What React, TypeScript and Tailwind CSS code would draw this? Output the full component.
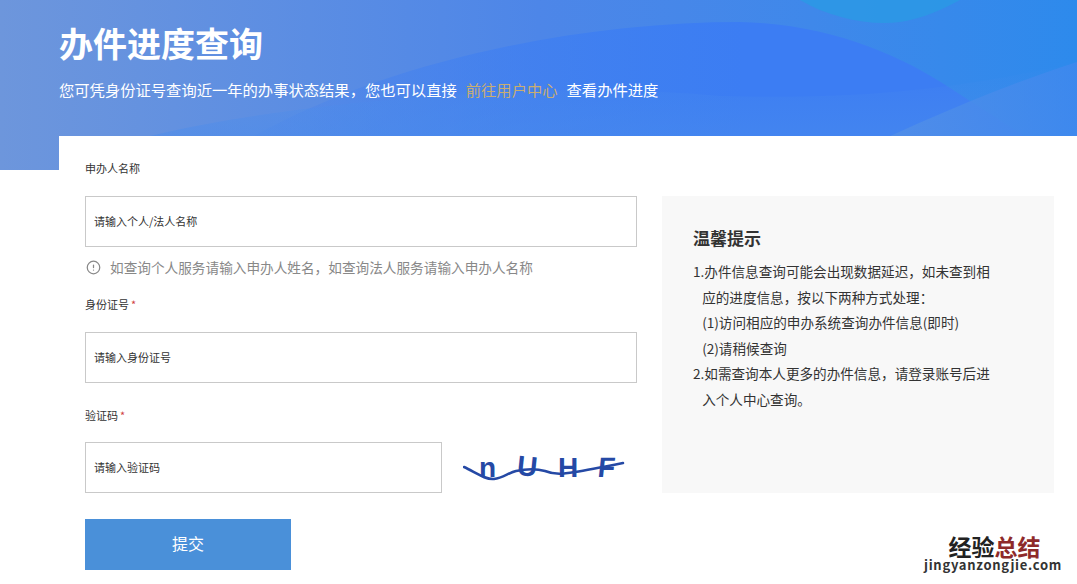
import { CircleAlert } from 'lucide-react'

const tips = [
  '1.办件信息查询可能会出现数据延迟，如未查到相',
  '\u00a0\u00a0\u00a0应的进度信息，按以下两种方式处理：',
  '\u00a0\u00a0\u00a0(1)访问相应的申办系统查询办件信息(即时)',
  '\u00a0\u00a0\u00a0(2)请稍候查询',
  '2.如需查询本人更多的办件信息，请登录账号后进',
  '\u00a0\u00a0\u00a0入个人中心查询。',
]

function Header() {
  return (
    <div className="relative h-[170px] overflow-hidden bg-gradient-to-r from-[#6d96dc] via-[#4d86e8] to-[#2d8aec]">
      {/* background waves */}
      <svg className="absolute inset-0 h-full w-full" viewBox="0 0 1077 170" preserveAspectRatio="none">
        <defs>
          <linearGradient id="band" x1="0" y1="0" x2="1" y2="0">
            <stop offset="0" stopColor="#3c7df3" stopOpacity="0" />
            <stop offset="0.62" stopColor="#3c7df3" stopOpacity="1" />
            <stop offset="1" stopColor="#3c7df3" stopOpacity="1" />
          </linearGradient>
          <linearGradient id="low" x1="0" y1="0" x2="1" y2="0">
            <stop offset="0" stopColor="#5a92e4" stopOpacity="0.8" />
            <stop offset="1" stopColor="#3f88ee" stopOpacity="0.8" />
          </linearGradient>
          <linearGradient id="fade" x1="0" y1="0" x2="0" y2="1">
            <stop offset="0" stopColor="#4a8cec" stopOpacity="0" />
            <stop offset="1" stopColor="#4a8cec" stopOpacity="0.7" />
          </linearGradient>
        </defs>
        <path d="M200 170 C340 70 560 22 740 22 C830 24 900 55 950 88 L1077 170 Z" fill="url(#band)" />
        <path d="M130 170 L150 136 C300 100 560 80 720 96 C850 100 960 90 1077 62 L1077 170 Z" fill="url(#fade)" />
        <path d="M820 170 C900 130 990 90 1077 62 L1077 170 Z" fill="url(#low)" />
        <path d="M800 0 C830 18 870 26 900 22 C925 18 945 8 960 0 Z" fill="#2a9be4" opacity="0.75" />
      </svg>
      <div className="relative pl-[59px]">
        <h1 className="pt-[18px] text-[34px] leading-[50px] font-bold text-white">办件进度查询</h1>
        <p className="mt-[9px] text-[15.3px] leading-[24px] text-white">
          您可凭身份证号查询近一年的办事状态结果，您也可以直接
          <span className="mx-[9px] text-[#c8ad72]">前往用户中心</span>
          查看办件进度
        </p>
      </div>
    </div>
  )
}

function Label({ text, required }: { text: string; required?: boolean }) {
  return (
    <div className="h-5 text-[11px] leading-[18px] text-[#333]">
      {text}
      {required && <span className="ml-[2px] text-[#d0403f]">*</span>}
    </div>
  )
}

function Captcha() {
  return (
    <div className="relative ml-[21px] h-[51px] w-[164px] overflow-hidden">
      <div className="flex h-full items-center pl-[16px] font-['Liberation_Sans',sans-serif] text-[28px] font-bold text-[#2549a5]">
        <span className="w-[38px]">n</span>
        <span className="w-[41px] rotate-6">U</span>
        <span className="w-[40px]">H</span>
        <span className="-skew-x-6">F</span>
      </div>
      {/* strike line */}
      <svg className="absolute inset-0" width="164" height="51" viewBox="0 0 164 51" fill="none">
        <path
          d="M1 25 C12 30 22 38 31 37 C40 36 45 31 53 29 C62 27 72 26 82 29 C92 33 100 32 112 30 C125 28 145 24 160 21"
          stroke="#2549a5"
          strokeWidth="2.5"
          strokeLinecap="round"
        />
      </svg>
    </div>
  )
}

function Tips() {
  return (
    <div className="mt-[37px] mr-[23px] ml-[25px] h-[297px] flex-1 bg-[#f8f8f8] pt-[30px] pl-[31px]">
      <h3 className="text-[17px] leading-[24px] font-bold text-[#333]">温馨提示</h3>
      <div className="mt-[9px] text-[13.6px] leading-[25.6px] whitespace-nowrap text-[#333]">
        {tips.map((line, i) => (
          <div key={i}>{line}</div>
        ))}
      </div>
    </div>
  )
}

export default function App() {
  return (
    <div className="relative h-[584px] overflow-hidden bg-white font-['Noto_Sans_CJK_SC','Liberation_Sans',sans-serif]">
      <Header />
      <div className="relative mt-[-34px] ml-[59px] flex h-[448px] bg-white pt-[23px] pl-[26px]">
        <div className="w-[552px] flex-none">
          <Label text="申办人名称" />
          <input
            className="mt-[17px] block h-[51px] w-full border border-[#c9c9c9] px-[8px] pb-[2px] text-[11px] placeholder:text-[#333]"
            placeholder="请输入个人/法人名称"
          />
          <div className="mt-[11px] flex h-5 items-center pb-[2px] text-[13.65px] whitespace-nowrap text-[#888]">
            <CircleAlert size={15} className="ml-px" />
            <span className="ml-[9px]">如查询个人服务请输入申办人姓名，如查询法人服务请输入申办人名称</span>
          </div>
          <div className="mt-[17px]">
            <Label text="身份证号" required />
          </div>
          <input
            className="mt-[17px] block h-[51px] w-full border border-[#c9c9c9] px-[8px] pb-[2px] text-[11px] placeholder:text-[#333]"
            placeholder="请输入身份证号"
          />
          <div className="mt-[23px]">
            <Label text="验证码" required />
          </div>
          <div className="mt-[16px] flex">
            <input
              className="block h-[51px] w-[357px] border border-[#c9c9c9] px-[8px] pb-[2px] text-[11px] placeholder:text-[#333]"
              placeholder="请输入验证码"
            />
            <Captcha />
          </div>
          <button className="mt-[26px] block h-[51px] w-[206px] bg-[#4a90d9] pb-[3px] text-[16px] text-white">提交</button>
        </div>
        <Tips />
      </div>
      {/* site watermark */}
      <div className="absolute top-[536px] right-[14px] w-[140px] text-center">
        <div className="h-[21px] pl-[3px] text-[23px] leading-[21px] font-bold text-[#222]">
          经验<span className="text-[#8e2a2a]">总结</span>
        </div>
        <div className="h-[16px] text-[13px] leading-[16px] font-bold tracking-[0.7px] text-[#333]">jingyanzongjie.com</div>
      </div>
    </div>
  )
}
